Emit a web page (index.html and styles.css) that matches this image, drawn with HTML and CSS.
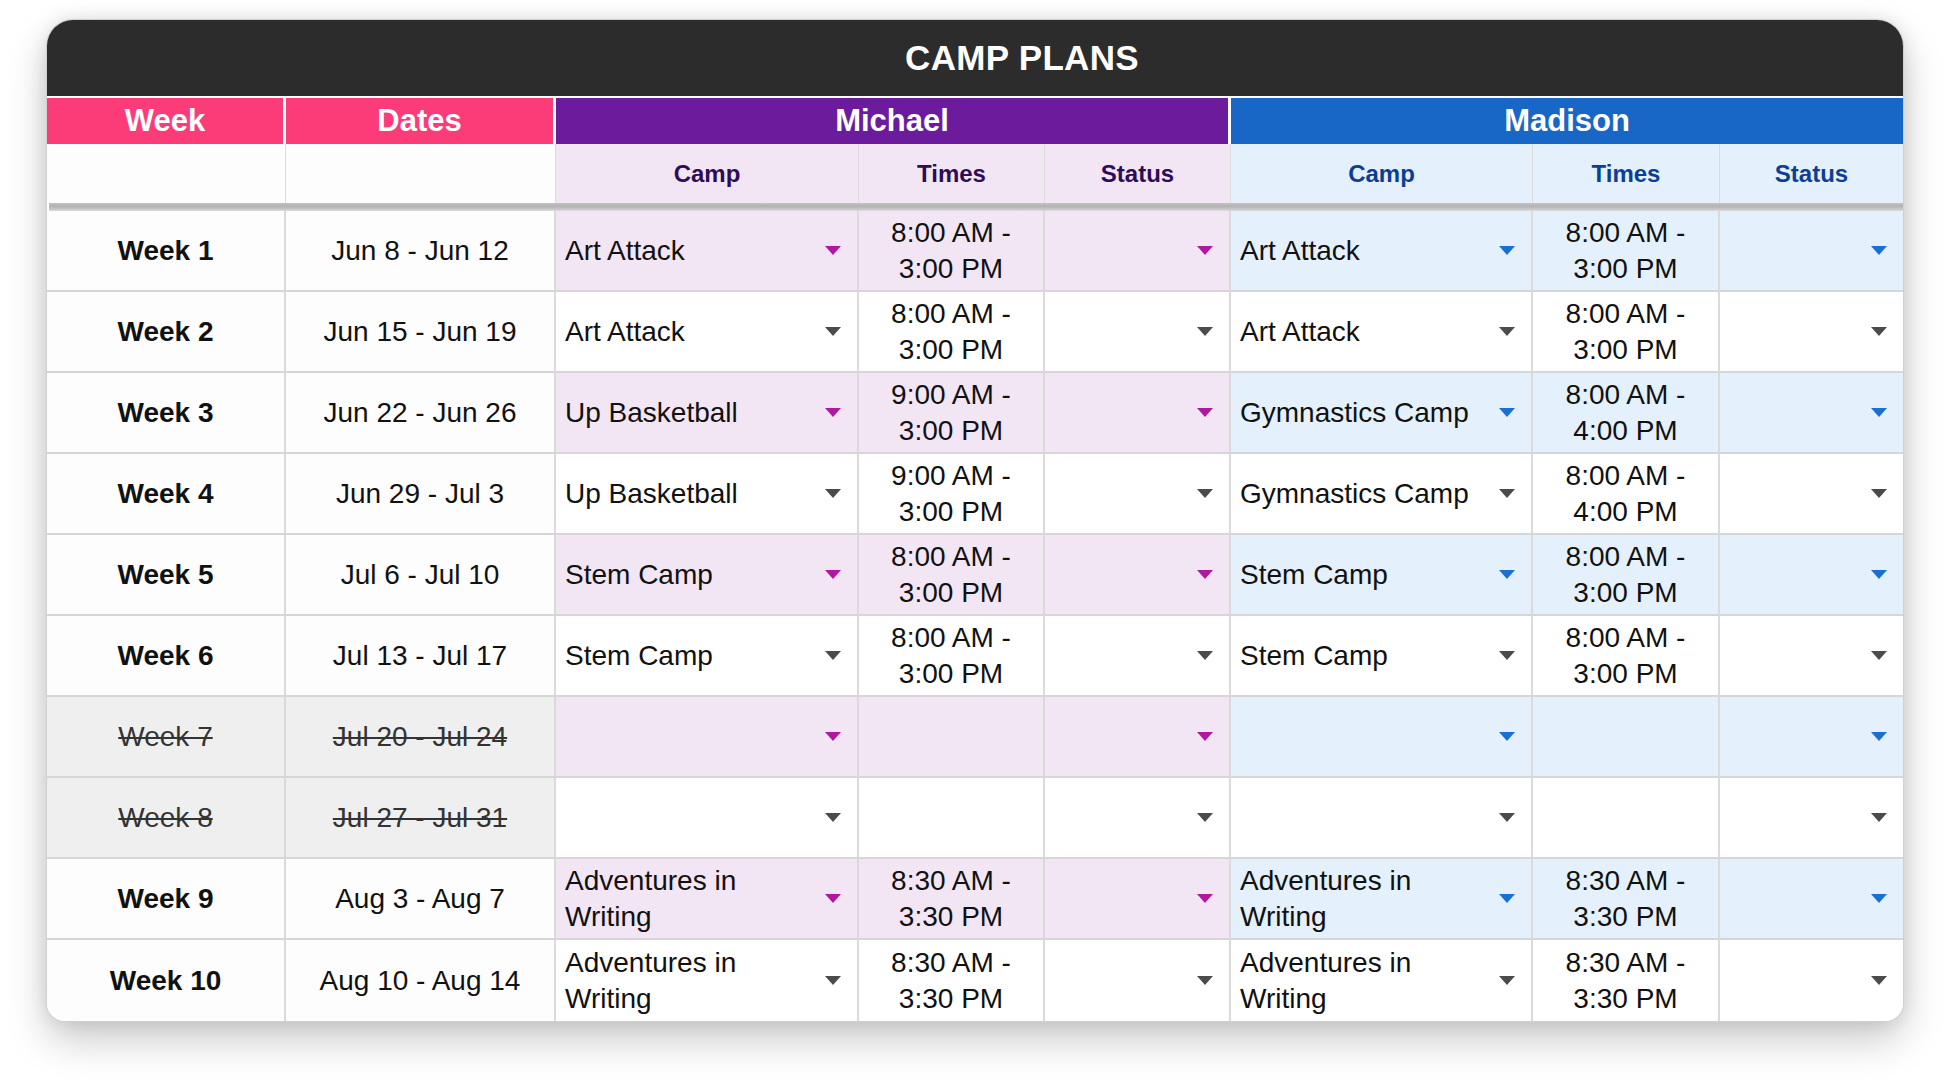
FILE: index.html
```html
<!DOCTYPE html>
<html>
<head>
<meta charset="utf-8">
<title>Camp Plans</title>
<link rel="stylesheet" href="styles.css">
</head>
<body>
<div class="card">
  <div class="title">CAMP PLANS</div>
  <div class="sheet">
    <div class="hd hd-pink">Week</div>
    <div class="hd hd-pink">Dates</div>
    <div class="hd hd-purple span3">Michael</div>
    <div class="hd hd-blue span3 last">Madison</div>

    <div class="sub"></div>
    <div class="sub"></div>
    <div class="sub sub-m">Camp</div>
    <div class="sub sub-m">Times</div>
    <div class="sub sub-m">Status</div>
    <div class="sub sub-b">Camp</div>
    <div class="sub sub-b">Times</div>
    <div class="sub sub-b last">Status</div>

    <div class="sep"></div>

    <!-- Week 1 -->
    <div class="c wk">Week 1</div>
    <div class="c dt">Jun 8 - Jun 12</div>
    <div class="c camp m-on"><span>Art Attack</span><i class="tri tri-m"></i></div>
    <div class="c time m-on">8:00 AM -<br>3:00 PM</div>
    <div class="c stat m-on"><i class="tri tri-m"></i></div>
    <div class="c camp b-on"><span>Art Attack</span><i class="tri tri-b"></i></div>
    <div class="c time b-on">8:00 AM -<br>3:00 PM</div>
    <div class="c stat b-on last"><i class="tri tri-b"></i></div>

    <!-- Week 2 -->
    <div class="c wk">Week 2</div>
    <div class="c dt">Jun 15 - Jun 19</div>
    <div class="c camp"><span>Art Attack</span><i class="tri"></i></div>
    <div class="c time">8:00 AM -<br>3:00 PM</div>
    <div class="c stat"><i class="tri"></i></div>
    <div class="c camp"><span>Art Attack</span><i class="tri"></i></div>
    <div class="c time">8:00 AM -<br>3:00 PM</div>
    <div class="c stat last"><i class="tri"></i></div>

    <!-- Week 3 -->
    <div class="c wk">Week 3</div>
    <div class="c dt">Jun 22 - Jun 26</div>
    <div class="c camp m-on"><span>Up Basketball</span><i class="tri tri-m"></i></div>
    <div class="c time m-on">9:00 AM -<br>3:00 PM</div>
    <div class="c stat m-on"><i class="tri tri-m"></i></div>
    <div class="c camp b-on"><span>Gymnastics Camp</span><i class="tri tri-b"></i></div>
    <div class="c time b-on">8:00 AM -<br>4:00 PM</div>
    <div class="c stat b-on last"><i class="tri tri-b"></i></div>

    <!-- Week 4 -->
    <div class="c wk">Week 4</div>
    <div class="c dt">Jun 29 - Jul 3</div>
    <div class="c camp"><span>Up Basketball</span><i class="tri"></i></div>
    <div class="c time">9:00 AM -<br>3:00 PM</div>
    <div class="c stat"><i class="tri"></i></div>
    <div class="c camp"><span>Gymnastics Camp</span><i class="tri"></i></div>
    <div class="c time">8:00 AM -<br>4:00 PM</div>
    <div class="c stat last"><i class="tri"></i></div>

    <!-- Week 5 -->
    <div class="c wk">Week 5</div>
    <div class="c dt">Jul 6 - Jul 10</div>
    <div class="c camp m-on"><span>Stem Camp</span><i class="tri tri-m"></i></div>
    <div class="c time m-on">8:00 AM -<br>3:00 PM</div>
    <div class="c stat m-on"><i class="tri tri-m"></i></div>
    <div class="c camp b-on"><span>Stem Camp</span><i class="tri tri-b"></i></div>
    <div class="c time b-on">8:00 AM -<br>3:00 PM</div>
    <div class="c stat b-on last"><i class="tri tri-b"></i></div>

    <!-- Week 6 -->
    <div class="c wk">Week 6</div>
    <div class="c dt">Jul 13 - Jul 17</div>
    <div class="c camp"><span>Stem Camp</span><i class="tri"></i></div>
    <div class="c time">8:00 AM -<br>3:00 PM</div>
    <div class="c stat"><i class="tri"></i></div>
    <div class="c camp"><span>Stem Camp</span><i class="tri"></i></div>
    <div class="c time">8:00 AM -<br>3:00 PM</div>
    <div class="c stat last"><i class="tri"></i></div>

    <!-- Week 7 -->
    <div class="c wk off">Week 7</div>
    <div class="c dt off">Jul 20 - Jul 24</div>
    <div class="c camp m-on"><span></span><i class="tri tri-m"></i></div>
    <div class="c time m-on"></div>
    <div class="c stat m-on"><i class="tri tri-m"></i></div>
    <div class="c camp b-on"><span></span><i class="tri tri-b"></i></div>
    <div class="c time b-on"></div>
    <div class="c stat b-on last"><i class="tri tri-b"></i></div>

    <!-- Week 8 -->
    <div class="c wk off">Week 8</div>
    <div class="c dt off">Jul 27 - Jul 31</div>
    <div class="c camp"><span></span><i class="tri"></i></div>
    <div class="c time"></div>
    <div class="c stat"><i class="tri"></i></div>
    <div class="c camp"><span></span><i class="tri"></i></div>
    <div class="c time"></div>
    <div class="c stat last"><i class="tri"></i></div>

    <!-- Week 9 -->
    <div class="c wk">Week 9</div>
    <div class="c dt">Aug 3 - Aug 7</div>
    <div class="c camp m-on"><span>Adventures in<br>Writing</span><i class="tri tri-m"></i></div>
    <div class="c time m-on">8:30 AM -<br>3:30 PM</div>
    <div class="c stat m-on"><i class="tri tri-m"></i></div>
    <div class="c camp b-on"><span>Adventures in<br>Writing</span><i class="tri tri-b"></i></div>
    <div class="c time b-on">8:30 AM -<br>3:30 PM</div>
    <div class="c stat b-on last"><i class="tri tri-b"></i></div>

    <!-- Week 10 -->
    <div class="c wk bottom">Week 10</div>
    <div class="c dt bottom">Aug 10 - Aug 14</div>
    <div class="c camp bottom"><span>Adventures in<br>Writing</span><i class="tri"></i></div>
    <div class="c time bottom">8:30 AM -<br>3:30 PM</div>
    <div class="c stat bottom"><i class="tri"></i></div>
    <div class="c camp bottom"><span>Adventures in<br>Writing</span><i class="tri"></i></div>
    <div class="c time bottom">8:30 AM -<br>3:30 PM</div>
    <div class="c stat bottom last"><i class="tri"></i></div>
  </div>
</div>
</body>
</html>
```

FILE: styles.css
```css
* { box-sizing: border-box; }

html, body {
  margin: 0;
  padding: 0;
  background: #ffffff;
}

body {
  font-family: "Liberation Sans", Arial, sans-serif;
  color: #111;
  padding: 20px 0 60px 47px;
  min-height: 1086px;
}

.card {
  width: 1856px;
  border-radius: 26px 26px 18px 18px;
  overflow: hidden;
  background: #fff;
  box-shadow: 0 0 0 1px #d0d0d0, 0 18px 40px rgba(0, 0, 0, 0.22), 0 0 18px rgba(0, 0, 0, 0.10);
}

.title {
  height: 76px;
  background: #2c2c2c;
  color: #fff;
  font-weight: bold;
  font-size: 35px;
  letter-spacing: 0.3px;
  display: flex;
  align-items: center;
  justify-content: center;
  padding-left: 94px;
  border-bottom: 2px solid #fff;
  box-sizing: content-box;
}

.sheet {
  display: grid;
  grid-template-columns: 239px 270px 303px 186px 186px 302px 187px 183px;
  grid-template-rows: 46px 59px 8px repeat(10, 81px);
}

/* top header row */
.hd {
  display: flex;
  align-items: center;
  justify-content: center;
  color: #fff;
  font-weight: bold;
  font-size: 31px;
  border-right: 3px solid #fff;
}
.hd.last { border-right: none; }
.span3 { grid-column: span 3; }
.hd-pink { background: #fc3c79; }
.hd-purple { background: #6b1b9b; }
.hd-blue { background: #1866c6; }

/* sub header row */
.sub {
  display: flex;
  align-items: center;
  justify-content: center;
  font-weight: bold;
  font-size: 24px;
  background: #fdfdfd;
  border-right: 1px solid #dcdcdc;
}
.sub.last { border-right: none; }
.sub-m { background: #f3e6f4; color: #2f0c56; }
.sub-b { background: #e4f0fb; color: #0c3f94; }

.sep {
  grid-column: 1 / -1;
  background: linear-gradient(#c2c2c2, #b3b3b3 40%, #c9c9c9 80%, #dedede);
  margin-left: 2px;
}

/* body cells */
.c {
  display: flex;
  align-items: center;
  font-size: 28px;
  line-height: 36px;
  background: #fff;
  border-right: 2px solid #dadada;
  border-bottom: 2px solid #d6d6d6;
  color: #111;
}
.c.last { border-right: none; }
.c.bottom { border-bottom: none; }

.wk {
  justify-content: center;
  font-weight: bold;
  background: #fdfdfd;
}
.dt {
  justify-content: center;
  background: #fdfdfd;
}
.off {
  background: #efefef;
  font-weight: normal;
  color: #333;
  text-decoration: line-through;
  text-decoration-thickness: 2px;
}

.camp {
  justify-content: space-between;
  padding: 0 16px 0 9px;
}
.time {
  justify-content: center;
  text-align: center;
}
.stat {
  justify-content: flex-end;
  padding-right: 16px;
}

.m-on { background: #f3e6f4; }
.b-on { background: #e4f0fb; }

.tri {
  display: block;
  width: 0;
  height: 0;
  border-left: 8px solid transparent;
  border-right: 8px solid transparent;
  border-top: 9px solid #4b4b4b;
  flex: none;
}
.tri-m { border-top-color: #b0199f; }
.tri-b { border-top-color: #1a6fd2; }
```
